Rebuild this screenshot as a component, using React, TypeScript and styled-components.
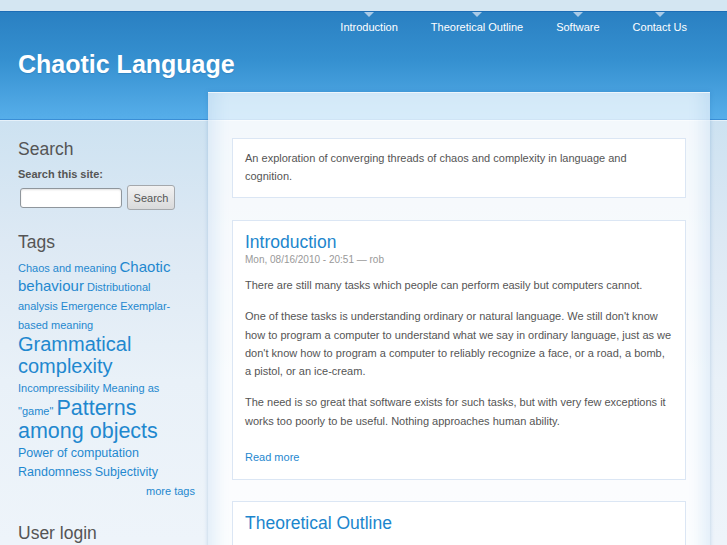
import React from "react";
import styled, { createGlobalStyle } from "styled-components";

const GlobalStyle = createGlobalStyle`
  html, body {
    margin: 0;
    padding: 0;
  }
  body {
    font-family: "Liberation Sans", Arial, sans-serif;
    color: #555;
    background: #eef4fa;
    overflow: hidden;
  }
`;

const Page = styled.div`
  width: 727px;
  min-height: 545px;
`;

const TopStrip = styled.div`
  height: 11px;
  background: #d4e6f2;
  border-bottom: 1px solid #1d6db6;
`;

const Header = styled.header`
  height: 107px;
  background: linear-gradient(#2a80c2 0%, #3590d0 45%, #52aae6 92%, #56aeea 100%);
  border-bottom: 1px solid #3a8ed6;
  display: flex;
  flex-direction: column;
`;

const Nav = styled.nav`
  display: flex;
  justify-content: flex-end;
  gap: 33px;
  padding-right: 40px;
`;

const NavItem = styled.a`
  position: relative;
  padding-top: 8px;
  font-size: 11px;
  line-height: 14px;
  color: #fff;
  text-decoration: none;

  &::before {
    content: "";
    position: absolute;
    top: 0;
    left: 50%;
    transform: translateX(-50%);
    border-left: 5px solid transparent;
    border-right: 5px solid transparent;
    border-top: 5px solid #a9cbe8;
  }
`;

const SiteName = styled.h1`
  margin: 15px 0 0 18px;
  font-size: 25px;
  line-height: 30px;
  font-weight: bold;
  color: #fff;
  text-shadow: 0 1px 1px rgba(20, 80, 140, 0.25);
`;

const Body = styled.div`
  display: flex;
  align-items: flex-start;
  border-top: 1px solid #e6f1fa;
  background: linear-gradient(#cde2f1 0px, #dde9f4 120px, #e9f1f8 260px, #eef4fa 420px);
  min-height: 424px;
`;

const Sidebar = styled.aside`
  width: 208px;
  box-sizing: border-box;
  padding: 17px 0 0 18px;
`;

const BlockTitle = styled.h2`
  margin: 0;
  font-size: 17.5px;
  line-height: 22px;
  font-weight: normal;
  color: #555;
`;

const Block = styled.section<{ $gap?: number }>`
  margin-bottom: ${(p) => p.$gap ?? 21}px;
`;

const Label = styled.div`
  margin-top: 7px;
  font-size: 11px;
  line-height: 14px;
  font-weight: bold;
  color: #555;
`;

const SearchRow = styled.div`
  display: flex;
  align-items: center;
  gap: 5px;
  margin-top: 4px;
  padding-left: 2px;
`;

const SearchInput = styled.input`
  width: 102px;
  height: 20px;
  box-sizing: border-box;
  border: 1px solid #8f969c;
  border-radius: 3px;
  background: #fff;
  box-shadow: inset 0 1px 2px rgba(0, 0, 0, 0.12);
  padding: 0 3px;
`;

const SearchButton = styled.button`
  width: 48px;
  height: 25px;
  box-sizing: border-box;
  border: 1px solid #a4a8ac;
  border-radius: 3px;
  background: linear-gradient(#f2f2f2, #d9dadb);
  font-family: "Liberation Sans", Arial, sans-serif;
  font-size: 11px;
  color: #555;
  padding: 0;
`;

const Cloud = styled.div`
  width: 170px;
  margin-top: 6px;
  line-height: 19px;
  font-size: 11px;
`;

const Tag = styled.a<{ $size: number }>`
  font-size: ${(p) => p.$size}px;
  line-height: ${(p) => (p.$size >= 20 ? 0.95 : p.$size > 14 ? 1.05 : 1.2)};
  color: #1f88cf;
  text-decoration: none;
`;

const MoreTags = styled.div`
  width: 177px;
  text-align: right;
  font-size: 11px;
  line-height: 19px;
  color: #1f88cf;
`;

const Main = styled.main`
  width: 502px;
  margin-top: -29px;
  box-sizing: border-box;
  padding: 45px 24px 40px;
  background: rgba(255, 255, 255, 0.76);
  border-top: 1px solid rgba(255, 255, 255, 0.6);
  box-shadow: 0 0 4px rgba(30, 100, 170, 0.25),
    inset 18px 0 14px -10px rgba(120, 180, 230, 0.18),
    inset -18px 0 14px -10px rgba(120, 180, 230, 0.18);
`;

const Mission = styled.div`
  background: #fff;
  border: 1px solid #dbe6f4;
  padding: 10px 12px 12px;
  font-size: 11px;
  line-height: 18px;
  color: #555;
  margin-bottom: 22px;
`;

const Node = styled.article`
  background: #fff;
  border: 1px solid #dbe6f4;
  padding: 10px 12px 13px;
  margin-bottom: 21px;
`;

const NodeTitle = styled.h2`
  margin: 0;
  font-size: 17.5px;
  line-height: 22px;
  font-weight: normal;
  color: #1c86cd;
`;

const Meta = styled.div`
  font-size: 10px;
  line-height: 14px;
  color: #999;
`;

const Para = styled.p`
  margin: 9px 0 13px;
  font-size: 11px;
  line-height: 18.3px;
  color: #555;

  & + & {
    margin-top: 0;
  }
`;

const ReadMore = styled.a`
  display: block;
  margin-top: 18px;
  font-size: 11px;
  line-height: 18px;
  color: #1f88cf;
  text-decoration: none;
`;

const nav = ["Introduction", "Theoretical Outline", "Software", "Contact Us"];

const tags: [string, number][] = [
  ["Chaos and meaning", 11],
  ["Chaotic behaviour", 15],
  ["Distributional analysis", 11],
  ["Emergence", 11],
  ["Exemplar-based meaning", 11],
  ["Grammatical complexity", 20],
  ["Incompressibility", 11],
  ["Meaning as \"game\"", 11],
  ["Patterns among objects", 21.5],
  ["Power of computation", 12.5],
  ["Randomness", 12.5],
  ["Subjectivity", 12.5],
];

export default function App() {
  return (
    <Page>
      <GlobalStyle />
      <TopStrip />
      <Header>
        <Nav>
          {nav.map((n) => (
            <NavItem key={n}>{n}</NavItem>
          ))}
        </Nav>
        <SiteName>Chaotic Language</SiteName>
      </Header>
      <Body>
        <Sidebar>
          <Block>
            <BlockTitle>Search</BlockTitle>
            <Label>Search this site:</Label>
            <SearchRow>
              <SearchInput type="text" />
              <SearchButton>Search</SearchButton>
            </SearchRow>
          </Block>
          <Block>
            <BlockTitle>Tags</BlockTitle>
            <Cloud>
              {tags.map(([t, s], i) => (
                <React.Fragment key={t}>
                  <Tag $size={s}>{t}</Tag>
                  {i < tags.length - 1 ? " " : null}
                </React.Fragment>
              ))}
            </Cloud>
            <MoreTags>more tags</MoreTags>
          </Block>
          <Block>
            <BlockTitle>User login</BlockTitle>
          </Block>
        </Sidebar>
        <Main>
          <Mission>
            An exploration of converging threads of chaos and complexity in language and cognition.
          </Mission>
          <Node>
            <NodeTitle>Introduction</NodeTitle>
            <Meta>Mon, 08/16/2010 - 20:51 — rob</Meta>
            <Para>There are still many tasks which people can perform easily but computers cannot.</Para>
            <Para>
              One of these tasks is understanding ordinary or natural language. We still don't know how to
              program a computer to understand what we say in ordinary language, just as we don't know how to
              program a computer to reliably recognize a face, or a road, a bomb, a pistol, or an ice-cream.
            </Para>
            <Para>
              The need is so great that software exists for such tasks, but with very few exceptions it works
              too poorly to be useful. Nothing approaches human ability.
            </Para>
            <ReadMore>Read more</ReadMore>
          </Node>
          <Node>
            <NodeTitle>Theoretical Outline</NodeTitle>
          </Node>
        </Main>
      </Body>
    </Page>
  );
}
